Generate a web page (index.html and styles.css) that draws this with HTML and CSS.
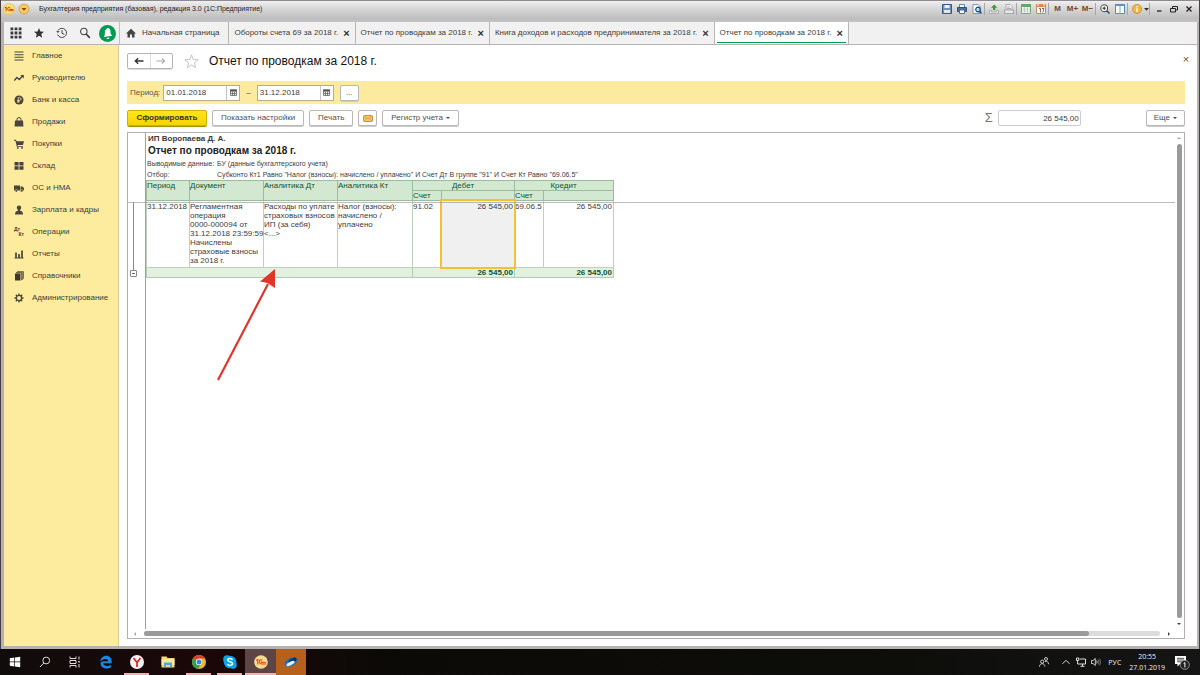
FILE: index.html
```html
<!DOCTYPE html>
<html lang="ru">
<head>
<meta charset="utf-8">
<title>Бухгалтерия предприятия (базовая), редакция 3.0</title>
<link rel="stylesheet" href="styles.css">
</head>
<body>
<div class="window">
  <header class="titlebar">
    <svg class="i12" viewBox="0 0 12 12"><circle cx="6" cy="6" r="5.600" fill="#fbe36a" stroke="#d9b46a" stroke-width=".6"/><path d="M1.800 5l1.400-1v4.200M7.200 4.700C5.600 3.700 4.600 4.800 4.700 6S5.600 8 10.400 7.600M7.400 6.100c-1-.5-1.200.4-.2.400h3" fill="none" stroke="#d8391c" stroke-width="1"/></svg>
    <svg class="i12" viewBox="0 0 12 12"><circle cx="6" cy="6" r="5" fill="#f8c95c" stroke="#c99b4e" stroke-width=".8"/><path d="M3.600 5h4.800L6 7.800z" fill="#7a4318"/></svg>
    <span class="title-text">Бухгалтерия предприятия (базовая), редакция 3.0 (1С:Предприятие)</span>
    <div class="title-tools">
      <button aria-label="Сохранить"><svg class="i10" viewBox="0 0 10 10"><path d="M.5.5h9v9h-9z" fill="#6d93bd" stroke="#355b86"/><path d="M2.500 1h5v3h-5z" fill="#eef4fa"/><path d="M2 6h6v3H2z" fill="#dbe6f1"/></svg></button>
      <button aria-label="Печать документа"><svg class="i10" viewBox="0 0 10 10"><path d="M2.500.5h5V4h-5z" fill="#fff" stroke="#6485a8"/><path d="M.5 3.500h9v4h-9z" fill="#44719f" stroke="#2c5079"/><path d="M2.500 6h5v3.500h-5z" fill="#fff" stroke="#4c7198"/></svg></button>
      <button aria-label="Просмотр"><svg class="i10" viewBox="0 0 10 10"><path d="M1 .5h5l2 2v7H1z" fill="#fff" stroke="#7d97b3"/><circle cx="6" cy="5.500" r="2.300" fill="#bde0f2" stroke="#154a72" stroke-width="1.200"/><path d="M7.500 7.200l2 2.300" stroke="#154a72" stroke-width="1.500"/></svg></button>
      <i class="sep"></i>
      <button aria-label="Загрузить"><svg class="i10" viewBox="0 0 10 10"><path d="M4 6V3.800H2L5.200.6l3.100 3.200H6.300V6z" fill="#3c9a37"/><path d="M.5 6.500h2v1.500h5V6.500h2v3h-9z" fill="#eee" stroke="#9a9a9a" stroke-width=".7"/></svg></button>
      <button aria-label="Выгрузить"><svg class="i10" viewBox="0 0 10 10"><path d="M2 .5h4l2 2V6H2z" fill="#fafafa" stroke="#999" stroke-width=".8"/><path d="M.5 6h9v3.500h-9zM3 3h3M3 4.500h4" fill="#e8e8e8" stroke="#8c8c8c" stroke-width=".7"/></svg></button>
      <i class="sep"></i>
      <button aria-label="Калькулятор"><svg class="i10" viewBox="0 0 10 10"><path d="M.5.5h9v9h-9z" fill="#f6fbf6" stroke="#78a783"/><path d="M0 0h10v3H0z" fill="#60a874"/><path d="M3.500 3v6M6.500 3v6M1 5h8M1 7h8" stroke="#a4bca9" stroke-width=".6"/></svg></button>
      <button aria-label="Календарь"><svg class="i10" viewBox="0 0 10 10"><path d="M.5.500h9v9h-9z" fill="#fffaf3" stroke="#bb8c6b"/><path d="M0 0h10v3H0z" fill="#d98654"/><path d="M3 4.500h1.500v4M6 4.500h2L6.800 8.500" fill="none" stroke="#7b5a48" stroke-width=".9"/><path d="M2 0v2M8 0v2" stroke="#fff"/></svg></button>
      <i class="sep"></i>
      <button class="mem">M</button><button class="mem">M+</button><button class="mem">M−</button>
      <i class="sep"></i>
      <button aria-label="Масштаб"><svg class="i10" viewBox="0 0 10 10"><circle cx="4.200" cy="4.200" r="3.400" fill="#f7f7f7" stroke="#555" stroke-width="1.100"/><path d="M2.500 4.200h3.400M4.200 2.500v3.400" stroke="#333"/><path d="M6.800 6.800l2.700 2.700" stroke="#444" stroke-width="1.500"/></svg></button>
      <button aria-label="Панели"><svg class="i10" viewBox="0 0 10 10"><path d="M.5.500h9v9h-9z" fill="#fff" stroke="#5688b5"/><path d="M0 0h10v2H0z" fill="#5b92c4"/><path d="M5 2v8" stroke="#7ba3c6"/></svg></button>
      <i class="sep"></i>
      <button aria-label="Справка"><svg class="i10" viewBox="0 0 10 10"><circle cx="5" cy="5" r="4.600" fill="#f3b53c" stroke="#b98a2d" stroke-width=".7"/><path d="M5 4.300v3.500M5 2v1.300" stroke="#fff" stroke-width="1.500"/></svg></button>
      <svg class="i5" viewBox="0 0 5 5"><path d="M0 2h5L2.500 4.800z" fill="#333"/></svg>
      <i class="sep"></i>
      <button aria-label="Свернуть"><svg class="i10" viewBox="0 0 10 10"><path d="M3 7h4.500" stroke="#222" stroke-width="1.300"/></svg></button>
      <button aria-label="Восстановить"><svg class="i10" viewBox="0 0 10 10"><path d="M3.500 4V2.500h5V6H7M1.500 4.500h5V8h-5z" fill="none" stroke="#222"/></svg></button>
      <button aria-label="Закрыть"><svg class="i10" viewBox="0 0 10 10"><path d="M2.500 2.500l5 5M7.500 2.500l-5 5" stroke="#222" stroke-width="1.300"/></svg></button>
    </div>
  </header>

  <div class="tabrow">
    <div class="quick">
      <button aria-label="Меню"><svg class="i12" viewBox="0 0 12 12" fill="#3a3a3a"><path d="M.5.5h2.800v2.800H.5zM4.600.5h2.800v2.800H4.600zM8.700.5h2.800v2.800H8.700zM.5 4.600h2.800v2.800H.5zM4.600 4.600h2.800v2.800H4.600zM8.700 4.600h2.800v2.800H8.700zM.5 8.700h2.800v2.800H.5zM4.600 8.700h2.800v2.800H4.600zM8.700 8.700h2.800v2.800H8.700z"/></svg></button>
      <button aria-label="Избранное"><svg class="i12" viewBox="0 0 12 12"><path d="M6 1l1.400 3.400 3.600.3-2.700 2.400.8 3.600L6 8.800l-3.100 1.900.8-3.600L1 4.700l3.600-.3z" fill="#333"/></svg></button>
      <button aria-label="История"><svg class="i12" viewBox="0 0 12 12" fill="none" stroke="#444"><path d="M2 3.500A4.600 4.600 0 1 1 1.600 7.500"/><path d="M6 3v3.300l2.300 1"/><path d="M.2 4l1.600 2 2-1.700z" fill="#444" stroke="none"/></svg></button>
      <button aria-label="Поиск"><svg class="i12" viewBox="0 0 12 12" fill="none" stroke="#444"><circle cx="4.800" cy="4.500" r="3.200" stroke-width="1.100"/><path d="M7.200 7l3.600 3.800" stroke-width="1.800"/></svg></button>
      <button aria-label="Уведомления"><svg class="i16" viewBox="0 0 16 16"><circle cx="8" cy="8" r="8" fill="#009a51"/><path d="M8.300 2.800c2.200.5 2.700 2 2.500 4 0 1.600.8 2.400 1.700 3.300l-8 1.200c.7-1 1.100-2 1-3.500-.2-2.300.5-4 2.800-5z" fill="#fff"/><path d="M7 12.200l2.800-.4c0 1.600-2.400 2-2.800.4z" fill="#fff"/></svg></button>
    </div>
    <nav class="tabs">
      <a class="tab home" href="#"><svg class="i10" viewBox="0 0 10 10"><path d="M5 .8L0 5.400h1.500V9.500h2.500V6.500h2v3h2.500V5.400H10z" fill="#444"/></svg><span>Начальная страница</span></a>
      <a class="tab" href="#"><span>Обороты счета 69 за 2018 г.</span><b>×</b></a>
      <a class="tab" href="#"><span>Отчет по проводкам за 2018 г.</span><b>×</b></a>
      <a class="tab" href="#"><span>Книга доходов и расходов предпринимателя за 2018 г.</span><b>×</b></a>
      <a class="tab current" href="#"><span>Отчет по проводкам за 2018 г.</span><b>×</b></a>
    </nav>
  </div>

  <div class="workspace">
    <nav class="sidebar">
      <a href="#"><svg class="i10" viewBox="0 0 10 10"><path d="M.5 1h9M.5 3.700h9M.5 6.300h9M.5 9h9" stroke="#444" stroke-width="1.100"/></svg>Главное</a>
      <a href="#"><svg class="i10" viewBox="0 0 10 10"><path d="M.3 7.500L3 4.500l2.300 2L8.500 3" fill="none" stroke="#444" stroke-width="1.300"/><path d="M6.300 2H9.800v3.500z" fill="#444"/></svg>Руководителю</a>
      <a href="#"><svg class="i10" viewBox="0 0 10 10"><circle cx="5" cy="5" r="4.500" fill="#4a443a"/><path d="M4.200 8V2.700h1.500a1.300 1.300 0 0 1 0 2.700H3.200M3.200 6.700h2.500" fill="none" stroke="#fdeaa0" stroke-width=".8"/></svg>Банк и касса</a>
      <a href="#"><svg class="i10" viewBox="0 0 10 10"><path d="M1 3.500h8l.4 6H.6z" fill="#4a443a"/><path d="M3 5V2.500a2 2 0 0 1 4 0V5" fill="none" stroke="#4a443a"/></svg>Продажи</a>
      <a href="#"><svg class="i10" viewBox="0 0 10 10" fill="#4a443a"><path d="M0 .8h2l.6 1.400H10L9 6H3.500l.2.900H9v.9H2.800L1.500 1.700H0z"/><circle cx="3.800" cy="8.900" r=".9"/><circle cx="8" cy="8.900" r=".9"/></svg>Покупки</a>
      <a href="#"><svg class="i10" viewBox="0 0 10 10" fill="#4a443a"><path d="M.5 1h4.100v3.400H.5zM5.400 1h4.100v3.400H5.400zM.5 5.200h4.100v3.600H.5zM5.400 5.200h4.100v3.600H5.400z"/></svg>Склад</a>
      <a href="#"><svg class="i10" viewBox="0 0 10 10" fill="#4a443a"><path d="M0 2.500h6v5H0zM6.500 3.500h2L10 5.300v2.200H6.500z"/><circle cx="2.300" cy="7.800" r="1.300" stroke="#fdeaa0" stroke-width=".5"/><circle cx="7.700" cy="7.800" r="1.300" stroke="#fdeaa0" stroke-width=".5"/></svg>ОС и НМА</a>
      <a href="#"><svg class="i10" viewBox="0 0 10 10" fill="#4a443a"><circle cx="5" cy="2.800" r="2.200"/><path d="M1 9.500c0-2.500 1-3.500 3-3.800V4h2v1.700c2 .3 3 1.300 3 3.800z"/></svg>Зарплата и кадры</a>
      <a href="#"><span class="dtkt"><i>Дт</i><i>Кт</i></span>Операции</a>
      <a href="#"><svg class="i10" viewBox="0 0 10 10"><path d="M.5 9h9" stroke="#4a443a"/><path d="M2 3.500V9M5 5V9M8 1.500V9" stroke="#4a443a" stroke-width="1.700"/></svg>Отчеты</a>
      <a href="#"><svg class="i10" viewBox="0 0 10 10"><path d="M1 2.500h5.500v7H1z" fill="#3e392f"/><path d="M2 2L3.500.6h6v7L7.500 9V2z" fill="#8a7d5a" stroke="#4a443a" stroke-width=".6"/></svg>Справочники</a>
      <a href="#"><svg class="i10" viewBox="0 0 10 10" fill="none" stroke="#4a443a"><circle cx="5" cy="5" r="2.700" stroke-width="1.300"/><path d="M5 .5v1.800M5 7.700v1.800M.5 5h1.800M7.700 5h1.800M1.800 1.800l1.300 1.300M6.900 6.900l1.300 1.300M1.800 8.200l1.300-1.300M6.900 3.100l1.300-1.300" stroke-width="1.300"/></svg>Администрирование</a>
    </nav>

    <main class="content">
      <div class="heading">
        <div class="history"><button aria-label="Назад"><svg class="i10" viewBox="0 0 10 10"><path d="M9.500 5H1.500M4.200 2.300L1.300 5l2.900 2.700" fill="none" stroke="#333" stroke-width="1.400"/></svg></button><button aria-label="Вперед"><svg class="i10" viewBox="0 0 10 10"><path d="M.5 5h8M5.800 2.300L8.700 5 5.800 7.700" fill="none" stroke="#aaa" stroke-width="1.100"/></svg></button></div>
        <svg class="star" viewBox="0 0 14 14"><path d="M7 .8l1.600 4.400 4.700.2-3.700 2.900 1.300 4.500L7 10.200l-3.900 2.600 1.300-4.500L.7 5.400l4.700-.2z" fill="#fff" stroke="#bbb" stroke-width=".8"/></svg>
        <h1>Отчет по проводкам за 2018 г.</h1>
        <button class="close" aria-label="Закрыть отчет">×</button>
      </div>

      <div class="period">
        <label for="from">Период:</label>
        <span class="date"><input id="from" type="text" value="01.01.2018"><button aria-label="Выбрать начало"><svg viewBox="0 0 7 7"><path d="M.5 1h6v5.500h-6zM1 4.500h5M2.500 2.500v4M4.500 2.500v4" fill="#eee" stroke="#666" stroke-width=".8"/><path d="M0 .5h7v2H0z" fill="#555"/></svg></button></span>
        <span class="dash">–</span>
        <span class="date"><input id="to" type="text" value="31.12.2018" aria-label="Конец периода"><button aria-label="Выбрать конец"><svg viewBox="0 0 7 7"><path d="M.5 1h6v5.500h-6zM1 4.500h5M2.500 2.500v4M4.500 2.500v4" fill="#eee" stroke="#666" stroke-width=".8"/><path d="M0 .5h7v2H0z" fill="#555"/></svg></button></span>
        <button class="btn more">...</button>
      </div>

      <div class="commands">
        <button class="btn primary">Сформировать</button>
        <button class="btn">Показать настройки</button>
        <button class="btn">Печать</button>
        <button class="btn mail" aria-label="Отправить"><svg viewBox="0 0 10 7"><rect x=".5" y=".5" width="9" height="6" rx="1" fill="#f7c873" stroke="#d98d2b"/><path d="M1 1.200l4 2.600 4-2.600M1 6l2.800-2.800M9 6L6.200 3.200" fill="none" stroke="#d98d2b" stroke-width=".7"/></svg></button>
        <button class="btn">Регистр учета<i class="caret"></i></button>
        <label class="sigma" for="sum">Σ</label>
        <input class="sum" id="sum" type="text" value="26 545,00">
        <button class="btn last">Еще<i class="caret"></i></button>
      </div>

      <section class="sheet">
        <div class="gutter"><i class="branch"></i><button aria-label="Свернуть группу"></button></div>
        <div class="page">
          <p class="org">ИП Воропаева Д. А.</p>
          <h2>Отчет по проводкам за 2018 г.</h2>
          <dl>
            <dt>Выводимые данные:</dt><dd>БУ (данные бухгалтерского учета)</dd>
            <dt>Отбор:</dt><dd>Субконто Кт1 Равно "Налог (взносы): начислено / уплачено" И Счет Дт В группе "91" И Счет Кт Равно "69.06.5"</dd>
          </dl>
          <table>
            <colgroup><col class="w43"><col class="w74"><col class="w74"><col class="w75"><col class="w29"><col class="w73"><col class="w29"><col class="w70"></colgroup>
            <thead>
              <tr><th rowspan="2">Период</th><th rowspan="2">Документ</th><th rowspan="2">Аналитика Дт</th><th rowspan="2">Аналитика Кт</th><th colspan="2" class="mid">Дебет</th><th colspan="2" class="mid">Кредит</th></tr>
              <tr><th>Счет</th><th></th><th>Счет</th><th></th></tr>
            </thead>
            <tbody>
              <tr class="entry"><td>31.12.2018</td><td>Регламентная<br>операция<br>0000-000094 от<br>31.12.2018 23:59:59<br>Начислены<br>страховые взносы<br>за 2018 г.</td><td>Расходы по уплате<br>страховых взносов<br>ИП (за себя)<br>&lt;...&gt;</td><td>Налог (взносы):<br>начислено /<br>уплачено</td><td>91.02</td><td class="num selected">26 545,00</td><td>69.06.5</td><td class="num">26 545,00</td></tr>
            </tbody>
            <tfoot>
              <tr><td colspan="4"></td><td colspan="2" class="num">26 545,00</td><td colspan="2" class="num">26 545,00</td></tr>
            </tfoot>
          </table>
        </div>
        <div class="vscroll"><i class="tri up"></i><i class="thumb"></i><i class="tri down"></i></div>
        <div class="hscroll"><i class="tri left"></i><span class="track"><i class="thumb"></i></span><i class="tri right"></i></div>
        <i class="freeze"></i>
        <svg class="arrow" viewBox="0 0 60 112"><path d="M1 111L51 15" stroke="#fff" stroke-width="4" opacity=".6"/><path d="M1 111L51 15" stroke="#e0352b" stroke-width="2.200"/><path d="M58 0L43 12.500l7.500 1.500 7.500 5z" fill="#e0352b"/></svg>
      </section>
    </main>
  </div>
</div>

<footer class="taskbar">
  <button class="sys" aria-label="Пуск"><svg class="i12" viewBox="0 0 12 12" fill="#fff"><path d="M.8 2.300l4.500-.7v4H.8zM6 1.500L11.200.700v4.900H6zM.8 6.300h4.500v4.100l-4.500-.7zM6 6.300h5.200v5L6 10.500z"/></svg></button>
  <button class="sys" aria-label="Поиск Windows"><svg class="i12" viewBox="0 0 12 12" fill="none" stroke="#ddd"><circle cx="7.200" cy="4.500" r="3.400"/><path d="M4.800 7L1 11"/></svg></button>
  <button class="sys" aria-label="Представление задач"><svg class="i12" viewBox="0 0 12 12" fill="none" stroke="#ddd"><path d="M1 .5v2h6v-2M1 4.500h6v3H1zM1 11.500v-2h6v2M10 .5v3M10 8v3.500"/><path d="M9.200 5h1.600v1.600H9.200z" fill="#ddd" stroke="none"/></svg></button>
  <button class="app" aria-label="Edge"><svg class="i14" viewBox="0 0 14 14"><path d="M3.800 6.300h5.400C9 3 4 3.200 1.200 6.800 1.500 3 4 .7 7.200.7c3.600 0 5.500 2.500 5.500 6v1.600H4.300c.3 3 4.500 3.400 7.700 1.600v2.700C6.500 15 .8 12.300 1.600 7.500z" fill="#1a86df"/></svg></button>
  <button class="app run" aria-label="Яндекс"><svg class="i14" viewBox="0 0 14 14"><circle cx="7" cy="7" r="7" fill="#f2f2f2"/><path d="M3.500 3L7 7.500V12M10.500 3L7 7.500" fill="none" stroke="#dc1f26" stroke-width="1.700"/></svg></button>
  <button class="app" aria-label="Проводник"><svg class="i14" viewBox="0 0 14 14"><path d="M.5 1.500h5l1 1.500h7v9.500H.5z" fill="#f7d774"/><path d="M.5 4h13v6H.5z" fill="#fbe7a0"/><path d="M3 7.500h8v5H9V10H5v2.500H3z" fill="#4aa8dc"/></svg></button>
  <button class="app run" aria-label="Chrome"><svg class="i14" viewBox="0 0 14 14"><circle cx="7" cy="7" r="7" fill="#e8b92c"/><path d="M7 7L1 3.500A7 7 0 0 1 13 3.500H7z" fill="#d9412f"/><path d="M7 7L1 3.500A7 7 0 0 0 6 13.900L9.500 8.500z" fill="#2fa14d"/><circle cx="7" cy="7" r="3.200" fill="#fff"/><circle cx="7" cy="7" r="2.500" fill="#4182e0"/></svg></button>
  <button class="app run" aria-label="Skype"><svg class="i14" viewBox="0 0 14 14"><circle cx="7" cy="7" r="6.300" fill="#0aa4e6"/><circle cx="4" cy="4" r="3.800" fill="#0aa4e6"/><circle cx="10" cy="10" r="3.800" fill="#0aa4e6"/><path d="M9.500 4.800C8.500 3 4.500 3.200 4.700 5.200c.2 1.900 4.800 1.200 4.800 3.400S5.200 11 4.300 9" fill="none" stroke="#fff" stroke-width="1.500"/></svg></button>
  <button class="app run active" aria-label="1С"><svg class="i14" viewBox="0 0 14 14"><circle cx="7" cy="7" r="6.800" fill="#fbd98c"/><path d="M2.200 5.500l1.600-1V9.500M8.300 5.200C6.600 4.200 5.300 5.200 5.400 7s1.400 2.300 6.800 2M8.600 7c-1.200-.7-1.400.5-.3.500h3.500" fill="none" stroke="#dc4a1c" stroke-width="1.100"/></svg></button>
  <button class="app orange" aria-label="Просмотр изображений"><svg class="i14" viewBox="0 0 14 14"><ellipse cx="7" cy="7" rx="7" ry="4" transform="rotate(-28 7 7)" fill="#1c6fc4"/><ellipse cx="8.500" cy="5.500" rx="4.500" ry="2" transform="rotate(-28 8.500 5.500)" fill="#0b2f63"/><ellipse cx="6.500" cy="8.500" rx="4.500" ry="1.700" transform="rotate(-28 6.500 8.500)" fill="#dff2ff"/></svg></button>
  <div class="tray">
    <svg class="i10" viewBox="0 0 10 10" fill="none" stroke="#ddd" stroke-width=".9"><circle cx="3.200" cy="4.700" r="1.600"/><path d="M.5 9.700c0-4 5.400-4 5.400 0"/><circle cx="7" cy="2" r="1.500"/><path d="M6 4.700c2-1 3.500.3 3.500 2.500"/></svg>
    <svg class="i10 chev" viewBox="0 0 10 10"><path d="M1.500 6.800L5 3.300l3.500 3.500" fill="none" stroke="#ddd"/></svg>
    <svg class="i10" viewBox="0 0 10 10" fill="none" stroke="#ddd"><path d="M3.500 2h6v5h-6M4.500 9.300h4M6.500 7v2M.5 1h2.200v2.500H.5zM1.600 3.500v3.500h2"/></svg>
    <svg class="i10" viewBox="0 0 10 10" fill="none" stroke="#ddd" stroke-width=".9"><path d="M.5 3.500h1.500l2.300-2v7L2 6.500H.5z"/><path d="M5.700 3.500q1 1.500 0 3"/><path d="M7.200 2.500q1.600 2.500 0 5M8.600 1.500q2 3.500 0 7" stroke="#777"/></svg>
    <span class="lang">РУС</span>
    <time><span>20:55</span><span>27.01.2019</span></time>
    <svg class="note" viewBox="0 0 16 16"><path d="M1 2h11v8H6l-2.500 2.500V10H1z" fill="#fff"/><path d="M3 4.300h7M3 6h7M3 7.800h5" stroke="#222" stroke-width=".8"/><circle cx="10.800" cy="10.800" r="4.600" fill="#222" stroke="#aaa" stroke-width=".8"/><path d="M9.600 9.500l1.300-.9v4.800" fill="none" stroke="#fff"/></svg>
  </div>
</footer>
</body>
</html>
```
FILE: styles.css
```css
* { box-sizing: border-box; }
html, body { height: 100%; }
body {
  margin: 0;
  display: flex;
  flex-direction: column;
  font: 8px/10px "Liberation Sans", Arial, sans-serif;
  color: #3c3c3c;
  background: #4a3f40;
}
button, input { font: inherit; color: inherit; }
button { padding: 0; border: 0; background: none; display: inline-flex; align-items: center; justify-content: center; }
a { color: inherit; text-decoration: none; }
i { font-style: normal; }
svg { display: block; flex: none; }
.i5 { width: 5px; height: 5px; }
.i10 { width: 10px; height: 10px; }
.i12 { width: 12px; height: 12px; }
.i14 { width: 14px; height: 14px; }
.i16 { width: 17px; height: 17px; }

.window {
  flex: 1;
  min-height: 0;
  margin: 0 1px;
  display: flex;
  flex-direction: column;
  border: solid #b5b2b2;
  border-width: 0 2px 3px 3px;
}

/* Title bar */
.titlebar {
  height: 22px;
  margin: 0 -2px 0 -3px;
  padding: 0 3px 6px 2px;
  display: flex;
  align-items: center;
  border-top: 1px solid #8f8b8e;
  background: linear-gradient(#f0f0f0, #dedede 25%, #bdbdbf 85%, #c4c4c4);
}
.titlebar > svg { margin-right: 3px; }
.title-text { margin-left: 6px; font-size: 7px; color: #222; white-space: nowrap; }
.title-tools { margin-left: auto; display: flex; align-items: center; }
.title-tools button { width: 15px; height: 12px; }
.title-tools .mem { font-size: 8px; font-weight: bold; color: #7a4526; }
.sep { width: 1px; height: 12px; margin-right: 1px; background: #a6a6a6; }

/* Tabs */
.tabrow { height: 23px; display: flex; background: #f1f1f1; border-bottom: 1px solid #b4b4b4; }
.quick { width: 115px; display: flex; align-items: center; }
.quick button { width: 23px; height: 22px; }
.tabs { display: flex; border-left: 1px solid #c0c0c0; }
.tab { display: flex; align-items: center; gap: 5px; padding: 0 5px; border-right: 1px solid #b8b8b8; white-space: nowrap; }
.tab.home { gap: 6px; padding-left: 6px; padding-right: 9px; }
.tab b { font-size: 11px; color: #333; }
.tab.current { background: linear-gradient(#009a51, #009a51) center bottom 1px / calc(100% - 4px) 1px no-repeat #fff; }

/* Sections panel */
.workspace { flex: 1; min-height: 0; display: flex; }
.sidebar { width: 115px; flex: none; background: #fdec9e; border-right: 1px solid #d8cd98; }
.sidebar a { height: 22px; display: flex; align-items: center; gap: 8px; padding-left: 10px; white-space: nowrap; }
.dtkt { width: 10px; font: italic bold 5px/5px "Liberation Sans", Arial, sans-serif; display: flex; flex-direction: column; }
.dtkt i:last-child { align-self: flex-end; }

/* Report form */
.content { flex: 1; min-width: 0; display: flex; flex-direction: column; padding: 0 12px 7px 8px; background: #fff; }
.heading { height: 36px; display: flex; align-items: center; padding-bottom: 4px; }
.history { display: flex; width: 46px; height: 16px; border: 1px solid #b5b5b5; border-radius: 2px; box-shadow: 0 1px 0 #ddd; }
.history button { flex: 1; }
.history button + button { border-left: 1px solid #ddd; }
.star { width: 15px; height: 15px; margin: 0 10px 0 11px; }
h1 { margin: 0; font: 12px/16px "Liberation Sans", Arial, sans-serif; color: #111; }
.close { margin: 0 -6px 4px auto; width: 10px; height: 10px; font-size: 11px; color: #555; }

.period { height: 23px; display: flex; align-items: center; padding-left: 3px; background: #fcea9e; }
.period label { color: #5c563f; }
.date { display: flex; width: 77px; height: 16px; margin-left: 3px; background: #fff; border: 1px solid #b5ad8d; }
.date input { flex: 1; min-width: 0; border: 0; padding: 0 2px; background: none; outline: 0; }
.date button { width: 13px; border-left: 1px solid #c5c5c5; }
.date svg { width: 7px; height: 7px; }
.dash { margin: 0 3px 0 6px; }

.btn { height: 16px; padding: 0 8px; border: 1px solid #b8b8b8; border-radius: 2px; background: #fff; box-shadow: 0 1px 0 #ccc; color: #505050; white-space: nowrap; }
.more { width: 19px; margin-left: 6px; padding: 0; }
.commands { height: 28px; display: flex; align-items: center; gap: 5px; }
.primary { width: 80px; padding: 0; font-weight: bold; color: #333; background: linear-gradient(#ffe51a, #f5d400); border-color: #cdb000; box-shadow: 0 1px 0 #a89000; }
.mail { width: 19px; padding: 0; }
.mail svg { width: 10px; height: 7px; }
.caret { margin-left: 3px; border: 2px solid transparent; border-top-color: #444; border-bottom: 0; }
.sigma { margin-left: auto; font-size: 13px; color: #777; }
.sum { width: 83px; height: 16px; padding: 0 1px; text-align: right; border: 1px solid #ccc; border-radius: 2px; }
.last { margin-left: 60px; padding: 0 7px; }

/* Spreadsheet */
.sheet {
  flex: 1;
  min-height: 0;
  position: relative;
  display: grid;
  grid-template: 1fr 9px / 18px 1fr 10px;
  border: 1px solid #b0b0b0;
}
.gutter { display: flex; flex-direction: column; padding: 69px 0 0 2px; border-right: 1px solid #a0a0a0; }
.branch { width: 1px; height: 68px; margin-left: 3px; background: #888; }
.gutter button { width: 7px; height: 7px; border: 1px solid #888; border-radius: 1px; background: linear-gradient(#666, #666) center / 3px 1px no-repeat; }
.page { padding-top: 1px; overflow: hidden; }
.org { margin: 0; padding-left: 2px; font-weight: bold; line-height: 10px; }
h2 { margin: 0; padding-left: 2px; font: bold 10px/14px "Liberation Sans", Arial, sans-serif; color: #222; }
dl { margin: 0; padding-left: 1px; display: grid; grid-template-columns: 70px 1fr; font-size: 7px; line-height: 11px; white-space: nowrap; }
dd { margin: 0; }
table { width: 468px; border-collapse: collapse; table-layout: fixed; }
.w43 { width: 43px; } .w74 { width: 74px; } .w75 { width: 75px; } .w29 { width: 29px; } .w73 { width: 73px; } .w70 { width: 70px; }
th, td { padding: 0 1px 0 0; vertical-align: top; text-align: left; font-weight: normal; line-height: 9px; white-space: nowrap; border: 1px solid #bfd0bf; }
th { height: 10px; line-height: 9px; background: #d3e8d0; border-color: #9dbb9d; color: #14532e; }
.mid { text-align: center; }
.entry td { height: 67px; padding-top: 1px; }
.num { text-align: right; }
.selected { position: relative; background: #f0f0f0; }
.selected::after { content: ""; position: absolute; inset: -2px; border: 2px solid #f2c230; }
tfoot td { height: 10px; background: #e2f0df; border-color: #b2ccb2; font-weight: bold; color: #14532e; }
.freeze { position: absolute; left: 0; right: 9px; top: 69px; height: 1px; background: #a0a0a0; opacity: 0.7; }
.arrow { position: absolute; left: 89px; top: 136px; width: 60px; height: 112px; }

.vscroll { display: flex; flex-direction: column; align-items: center; padding: 4px 0; gap: 5px; }
.vscroll .thumb { flex: 1; width: 5px; border-radius: 3px; background: #9a9a9a; }
.hscroll { grid-column: 1 / -1; display: flex; align-items: center; gap: 8px; padding: 0 14px 0 6px; }
.track { flex: 1; height: 5px; display: flex; border-radius: 3px; background: #dcdcdc; }
.track .thumb { width: 93%; border-radius: 3px; background: #9a9a9a; }
.tri { border: 2px solid transparent; }
.up { border-bottom-color: #aaa; border-top: 0; }
.down { border-top-color: #444; border-bottom: 0; }
.left { border-right-color: #aaa; border-left: 0; }
.right { border-left-color: #444; border-right: 0; }

/* Taskbar */
.taskbar { height: 26px; flex: none; display: flex; background: linear-gradient(90deg, #100c0c, #1c0708 18%, #0b0a07 32%, #0d0d0a 75%, #151515); color: #eee; }
.sys { width: 30px; }
.app { width: 31px; }
.run { background: linear-gradient(#efb0b4, #efb0b4) center bottom / 25px 2px no-repeat; }
.app.active { background: linear-gradient(#efb0b4, #efb0b4) center bottom / 100% 2px no-repeat #5c4544; }
.app.orange { width: 30px; background: #b5611c; }
.tray { margin-left: auto; display: flex; align-items: center; gap: 5px; padding-right: 10px; font: 7px/11px "Open Sans", "Noto Sans", sans-serif; }
.chev { margin-left: 7px; }
.lang { margin-left: 2px; }
.tray time { display: flex; flex-direction: column; align-items: center; margin-left: 3px; }
.note { width: 16px; height: 16px; margin-left: 4px; }
```
